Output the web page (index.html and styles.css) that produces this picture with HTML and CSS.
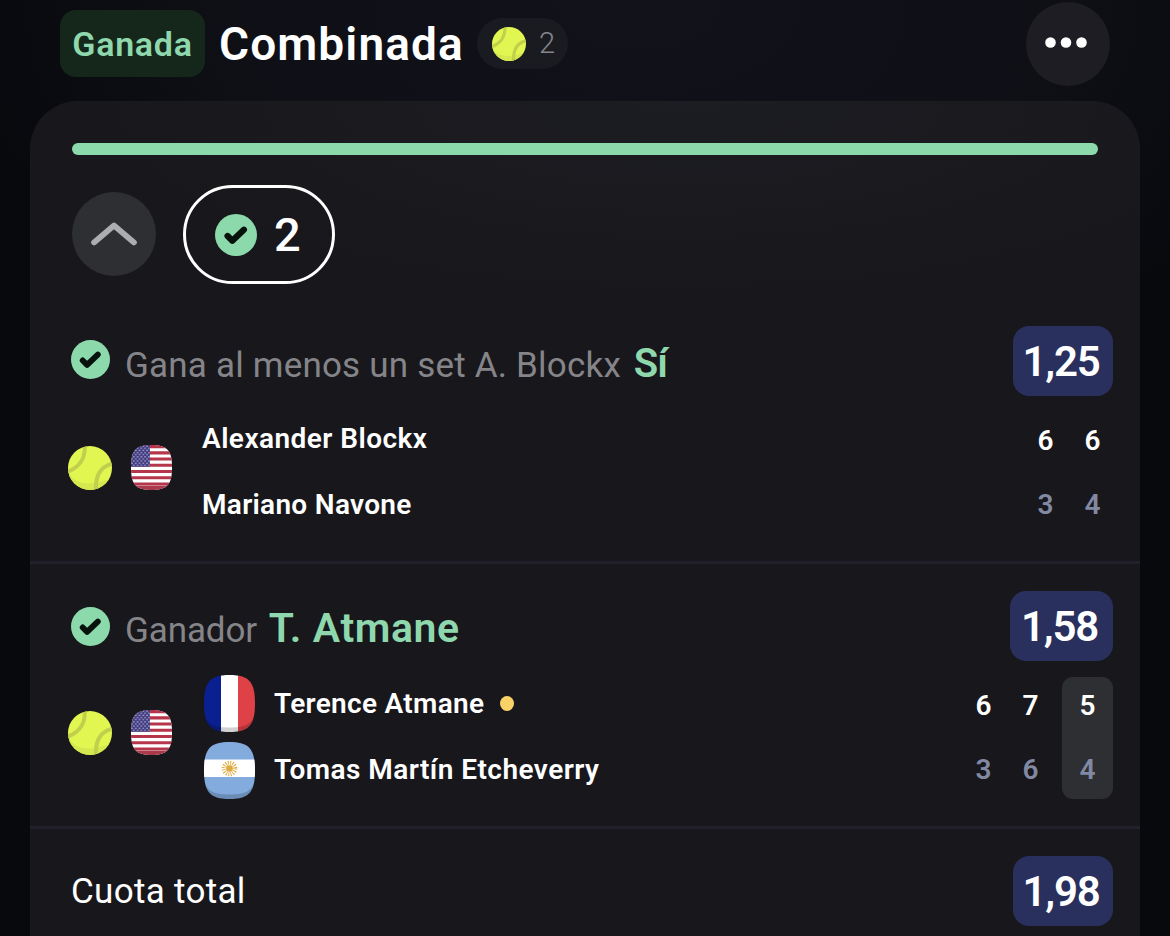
FILE: index.html
```
<!DOCTYPE html>
<html lang="es">
<head>
    <meta charset="UTF-8">
    <title>Combinada</title>
    <link rel="stylesheet" href="styles.css">
</head>
<body>
    <svg class="defs" width="0" height="0">
        <defs>
            <clipPath id="squircle">
                <path d="M25.5 0C46 0 51 8 51 28.500C51 49 46 57 25.500 57C5 57 0 49 0 28.500C0 8 5 0 25.500 0Z"/>
            </clipPath>
            <clipPath id="circle"><circle cx="22" cy="22" r="22"/></clipPath>
            <pattern id="stars" width="4.700" height="5.400" patternUnits="userSpaceOnUse">
                <circle cx="1.200" cy="1.500" r="0.850" fill="#d2cdec"/>
                <circle cx="3.500" cy="4.200" r="0.850" fill="#d2cdec"/>
            </pattern>
        </defs>
        <symbol id="ball" viewBox="0 0 44 44">
            <g clip-path="url(#circle)">
                <rect width="44" height="44" fill="#e1f651"/>
                <path d="M0 24C4 38 20 42 44 32V44H0Z" fill="#d5e84f"/>
                <path d="M16.500 -1C18 11 12 21 -1 26" fill="none" stroke="#c0d04d" stroke-width="4"/>
                <path d="M45 17.500C33 20 27 29 28 45" fill="none" stroke="#c0d04d" stroke-width="4"/>
            </g>
        </symbol>
        <symbol id="check" viewBox="0 0 40 40">
            <circle cx="20" cy="20" r="20" fill="#8cdaab"/>
            <path d="M12 21L16.500 25.500L27.500 15" fill="none" stroke="#08120d" stroke-width="6" stroke-linecap="round" stroke-linejoin="round"/>
        </symbol>
        <symbol id="usa" viewBox="0 0 51 57" preserveAspectRatio="none">
            <g clip-path="url(#squircle)">
                <rect width="51" height="57" fill="#fff"/>
                <path d="M0 2H51M0 9.900H51M0 17.800H51M0 25.700H51M0 33.600H51M0 41.500H51M0 49.400H51" stroke="#b5364a" stroke-width="3.950"/>
                <rect width="23.500" height="27.600" fill="#3f3b80"/>
                <rect width="23.500" height="27.600" fill="url(#stars)"/>
                <path d="M0 46L7 51.500H44L51 46V57H0Z" fill="#aa3a4b"/>
            </g>
        </symbol>
        <symbol id="france" viewBox="0 0 51 57">
            <g clip-path="url(#squircle)">
                <rect width="17" height="57" fill="#0b2090"/>
                <rect x="17" width="17" height="57" fill="#fff"/>
                <rect x="34" width="17" height="57" fill="#de4146"/>
                <path d="M0 38C3 50 11 52.500 25.500 52.500C40 52.500 48 50 51 38V57H0Z" fill="#000" opacity=".18"/>
            </g>
        </symbol>
        <symbol id="argentina" viewBox="0 0 51 57">
            <g clip-path="url(#squircle)">
                <rect width="51" height="57" fill="#83abdd"/>
                <rect y="17.500" width="51" height="17.500" fill="#fff"/>
                <circle cx="25.500" cy="26.500" r="5.600" fill="none" stroke="#dfaa40" stroke-width="4.500" stroke-dasharray="0.900 1.299"/>
                <circle cx="25.500" cy="26.500" r="3.300" fill="#dfaa40"/>
                <path d="M0 38C3 50 11 52.500 25.500 52.500C40 52.500 48 50 51 38V57H0Z" fill="#000" opacity=".18"/>
            </g>
        </symbol>
    </svg>

    <header class="header">
        <span class="status">Ganada</span>
        <h1 class="title">Combinada</h1>
        <div class="count">
            <svg class="count-ball"><use href="#ball"/></svg>
            <span class="count-num">2</span>
        </div>
        <button class="more">
            <svg width="42" height="11"><circle cx="5.500" cy="5.500" r="5.300"/><circle cx="21" cy="5.500" r="5.300"/><circle cx="36.500" cy="5.500" r="5.300"/></svg>
        </button>
    </header>

    <main class="card">
        <div class="progress"></div>
        <div class="summary">
            <button class="toggle">
                <svg width="46" height="26" viewBox="0 0 46 26"><path d="M3 21.500L23 4.500L43 21.500" fill="none" stroke="#abadb1" stroke-width="5.600" stroke-linecap="round" stroke-linejoin="round"/></svg>
            </button>
            <div class="hits">
                <svg class="hits-check"><use href="#check"/></svg>
                <span class="hits-num">2</span>
            </div>
        </div>

        <section class="leg">
            <div class="leg-head">
                <svg class="leg-check"><use href="#check"/></svg>
                <p class="market">Gana al menos un set A. Blockx <b class="pick pick-yes">Sí</b></p>
                <span class="odds">1,25</span>
            </div>
            <div class="match">
                <svg class="match-ball"><use href="#ball"/></svg>
                <svg class="match-country"><use href="#usa"/></svg>
                <div class="players">
                    <div class="player"><span class="name name-wide">Alexander Blockx</span></div>
                    <div class="player"><span class="name">Mariano Navone</span></div>
                </div>
                <div class="scores">
                    <div class="set"><span>6</span><span class="lost">3</span></div>
                    <div class="set"><span>6</span><span class="lost">4</span></div>
                </div>
            </div>
        </section>

        <section class="leg">
            <div class="leg-head">
                <svg class="leg-check"><use href="#check"/></svg>
                <p class="market market-tight">Ganador <b class="pick">T. Atmane</b></p>
                <span class="odds odds-wide">1,58</span>
            </div>
            <div class="match">
                <svg class="match-ball"><use href="#ball"/></svg>
                <svg class="match-country"><use href="#usa"/></svg>
                <div class="players players-flags">
                    <div class="player">
                        <svg class="flag"><use href="#france"/></svg>
                        <span class="name">Terence Atmane</span>
                        <i class="serve"></i>
                    </div>
                    <div class="player">
                        <svg class="flag"><use href="#argentina"/></svg>
                        <span class="name name-wide">Tomas Martín Etcheverry</span>
                    </div>
                </div>
                <div class="scores">
                    <div class="set"><span>6</span><span class="lost">3</span></div>
                    <div class="set"><span>7</span><span class="lost">6</span></div>
                    <div class="set current"><span>5</span><span class="lost">4</span></div>
                </div>
            </div>
        </section>

        <footer class="total">
            <span class="total-label">Cuota total</span>
            <span class="odds">1,98</span>
        </footer>
    </main>
</body>
</html>
```
FILE: styles.css
```
* {
    box-sizing: border-box;
}
body {
    margin: 0;
    height: 936px;
    overflow: hidden;
    display: flex;
    flex-direction: column;
    background: radial-gradient(ellipse 680px 420px at 640px 0, #11121a 0%, #0f1016 60%, #08090d 100%);
    color: #fff;
    font-family: Roboto, "Liberation Sans", sans-serif;
}
.defs {
    position: absolute;
}
button {
    border: 0;
    padding: 0;
    display: flex;
    align-items: center;
    justify-content: center;
    border-radius: 50%;
}
.header {
    height: 101px;
    flex: none;
    display: flex;
    align-items: flex-start;
    padding: 2px 60px 0;
}
.status {
    width: 145px;
    height: 67px;
    margin-top: 8px;
    border-radius: 16px;
    background: #15271b;
    color: #8fd8ae;
    font-size: 34px;
    font-weight: 600;
    line-height: 68px;
    text-align: center;
    letter-spacing: 0.7px;
}
.title {
    margin: 15px 0 0 14px;
    width: 258px;
    font-size: 46px;
    font-weight: 600;
    line-height: 54px;
    letter-spacing: 1.1px;
    white-space: nowrap;
}
.count {
    width: 91px;
    height: 51px;
    margin-top: 16px;
    padding-left: 15px;
    border-radius: 26px;
    background: #1a1b21;
    display: flex;
    align-items: center;
    gap: 13px;
}
.count-ball {
    width: 34px;
    height: 34px;
}
.count-num {
    color: #85868c;
    font-size: 29px;
    font-weight: 300;
    line-height: 28px;
    padding-bottom: 1px;
}
.more {
    width: 84px;
    height: 84px;
    margin-left: auto;
    padding: 0 4px 4px 0;
    background: #1d1d23;
}
.more svg {
    fill: #fff;
}
.card {
    flex: 1;
    margin: 0 30px;
    padding-top: 42px;
    border-radius: 48px 48px 0 0;
    background: radial-gradient(ellipse 580px 190px at 650px 0, #1c1d22 0%, #18171c 100%);
}
.progress {
    height: 12px;
    margin: 0 42px;
    border-radius: 6px;
    background: #8cdaab;
}
.summary {
    display: flex;
    align-items: flex-start;
    gap: 27px;
    height: 99px;
    margin: 30px 42px 15px;
}
.toggle {
    width: 84px;
    height: 84px;
    margin-top: 7px;
    background: #2e2f33;
}
.hits {
    width: 152px;
    height: 99px;
    padding-left: 29px;
    border: 3px solid #fff;
    border-radius: 50px;
    display: flex;
    align-items: center;
    gap: 17px;
}
.hits-check {
    width: 42px;
    height: 42px;
}
.hits-num {
    font-size: 47px;
    font-weight: 500;
}
.leg {
    height: 265px;
    padding: 27px 27px 0 38px;
    border-bottom: 3px solid #20212b;
}
.leg-head {
    display: flex;
    height: 70px;
}
.leg-check {
    width: 39px;
    height: 39px;
    margin: 14px 15px 0 3px;
    flex: none;
}
.leg + .leg .leg-check {
    margin-top: 16px;
}
.market {
    margin: 11px 0 0;
    color: #858589;
    font-size: 35px;
    font-weight: 400;
    line-height: 54px;
    letter-spacing: 0.2px;
    white-space: nowrap;
}
.market-tight {
    margin-top: 10px;
    letter-spacing: -0.1px;
}
.pick {
    margin-left: 3px;
    color: #8fd8ae;
    font-size: 41px;
    font-weight: 600;
    letter-spacing: 0.6px;
}
.pick-yes {
    margin-left: 4px;
    font-size: 40px;
    letter-spacing: -1px;
}
.odds {
    width: 100px;
    height: 70px;
    margin-left: auto;
    padding-right: 4px;
    border-radius: 16px;
    background: #29305d;
    font-size: 42px;
    font-weight: 600;
    line-height: 72px;
    text-align: center;
    letter-spacing: -1.2px;
}
.odds-wide {
    width: 103px;
}
.match {
    display: flex;
    margin-top: 14px;
}
.match-ball {
    width: 44px;
    height: 44px;
    margin-top: 36px;
}
.match-country {
    width: 41px;
    height: 45px;
    margin: 35px 30px 0 19px;
}
.players {
    display: flex;
    flex-direction: column;
    gap: 10px;
}
.players-flags {
    padding-left: 2px;
}
.player {
    display: flex;
    align-items: center;
    height: 57px;
}
.flag {
    width: 51px;
    height: 57px;
    margin-right: 19px;
}
.name {
    font-size: 28px;
    font-weight: 600;
    letter-spacing: 0.3px;
}
.name-wide {
    letter-spacing: 0.45px;
}
.player + .player .name {
    padding-bottom: 2px;
}
.serve {
    width: 14px;
    height: 15px;
    margin-left: 16px;
    border-radius: 50%;
    background: #f8d267;
}
.scores {
    display: flex;
    margin: 2px -3px 0 auto;
    height: 122px;
}
.set {
    width: 47px;
    padding: 13px 0;
    display: flex;
    flex-direction: column;
    justify-content: space-between;
    font-size: 28px;
    font-weight: 600;
    line-height: 32px;
    text-align: center;
}
.current {
    width: 51px;
    margin: 0 3px 0 8px;
    border-radius: 11px;
    background: #2e2f33;
}
.lost {
    color: #8289a2;
}
.total {
    display: flex;
    padding: 27px 27px 0 41px;
}
.total-label {
    font-size: 35px;
    line-height: 72px;
    letter-spacing: 0.3px;
}
```
